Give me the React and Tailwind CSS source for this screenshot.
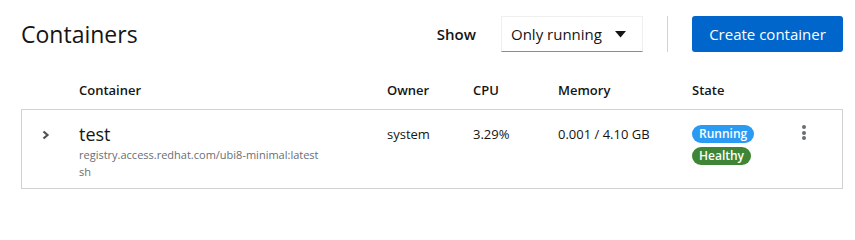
import React from "react";

const font = { fontFamily: '"Open Sans", "Liberation Sans", sans-serif' };

const cols = "grid grid-cols-[58px_308px_86px_85px_134px_110px_1fr]";

const ChevronRight = () => (
  <svg width="8" height="10" viewBox="0 0 8 10" className="text-[#4f5255]">
    <path d="M1.5 1.5 L5.5 5 L1.5 8.5" fill="none" stroke="currentColor" strokeWidth="2.2" />
  </svg>
);

const CaretDown = () => (
  <svg width="11" height="7" viewBox="0 0 11 7">
    <path d="M0 0 H11 L5.5 6.5 Z" fill="#151515" />
  </svg>
);

const Kebab = () => (
  <div className="flex flex-col gap-[1.5px] items-center w-[4px]">
    <span className="w-[4px] h-[4px] rounded-full bg-[#6a6e73]" />
    <span className="w-[4px] h-[4px] rounded-full bg-[#6a6e73]" />
    <span className="w-[4px] h-[4px] rounded-full bg-[#6a6e73]" />
  </div>
);

export default function App() {
  return (
    <div className="bg-white w-[855px] h-[208px] pl-[21px] pr-[12px] pt-[16px] text-[#151515]" style={font}>
      {/* toolbar */}
      <div className="flex items-center h-[36px]">
        <h1 className="text-[23px] leading-none flex-1">Containers</h1>
        <span className="text-[15px] font-semibold mr-[25px]">Show</span>
        <div className="w-[142px] h-[36px] flex items-center justify-between pl-[9px] pr-[16px] border border-[#f0f0f0] border-b-[#8a8d90] text-[15px]">
          <span>Only running</span>
          <CaretDown />
        </div>
        <div className="w-px h-[36px] bg-[#d2d2d2] mx-[24px]" />
        <button className="h-[36px] w-[151px] rounded-[3px] bg-[#0066cc] text-white text-[15px]">
          Create container
        </button>
      </div>

      {/* header */}
      <div className={`${cols} items-end h-[57px] pb-[9px] text-[13px] leading-[20px] font-semibold`}>
        <div />
        <div>Container</div>
        <div>Owner</div>
        <div>CPU</div>
        <div>Memory</div>
        <div>State</div>
        <div />
      </div>

      {/* row */}
      <div className={`${cols} border border-[#d2d2d2] h-[80px] pt-[13px] text-[13px]`}>
        <div className="pl-[20px] pt-[7px]">
          <ChevronRight />
        </div>
        <div className="-ml-px">
          <div className="text-[18px] leading-[22px]">test</div>
          <div className="text-[11px] leading-[17px] text-[#6a6e73] mt-[1px]">
            registry.access.redhat.com/ubi8-minimal:latest
          </div>
          <div className="text-[11px] leading-[17px] text-[#6a6e73]">sh</div>
        </div>
        <div className="-ml-px pt-[2px]">system</div>
        <div className="-ml-px pt-[2px]">3.29%</div>
        <div className="-ml-px pt-[2px]">0.001 / 4.10 GB</div>
        <div className="-ml-px flex flex-col items-start gap-[4px] pt-[2px]">
          <span className="h-[18px] px-[7px] rounded-full bg-[#2b9af3] text-white text-[12px] font-semibold leading-[18px]">
            Running
          </span>
          <span className="h-[18px] px-[7px] rounded-full bg-[#3e8635] text-white text-[12px] font-semibold leading-[18px]">
            Healthy
          </span>
        </div>
        <div className="-ml-px pt-[2px]">
          <Kebab />
        </div>
      </div>
    </div>
  );
}
